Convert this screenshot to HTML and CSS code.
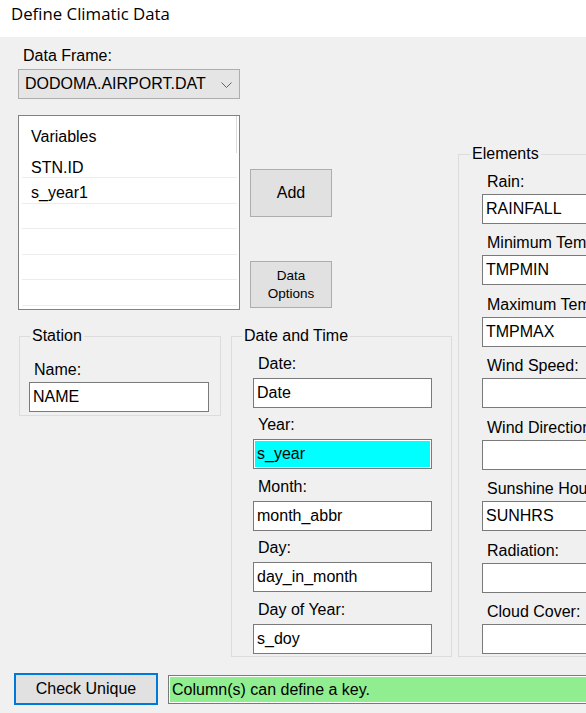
FILE: index.html
```html
<!DOCTYPE html>
<html>
<head>
<meta charset="utf-8">
<title>Define Climatic Data</title>
<link rel="stylesheet" href="styles.css">
</head>
<body>
<div class="title">Define Climatic Data</div>
<div class="content">
  <div class="left">
    <div class="top">
      <div class="pick">
        <div class="lbl">Data Frame:</div>
        <div class="combo">
          <span>DODOMA.AIRPORT.DAT</span>
          <svg viewBox="0 0 11 6" width="11" height="6"><polyline points="0.5,0.5 5.5,5.5 10.5,0.5" fill="none" stroke="#606060" stroke-width="1"/></svg>
        </div>
        <div class="list">
          <div class="list-head">Variables</div>
          <div class="row">STN.ID</div>
          <div class="row">s_year1</div>
          <div class="row"></div>
          <div class="row"></div>
          <div class="row"></div>
          <div class="row"></div>
        </div>
      </div>
      <div class="btns">
        <button class="btn add">Add</button>
        <button class="btn opts">Data<br>Options</button>
      </div>
    </div>
    <div class="groups">
      <fieldset class="grp station">
        <legend>Station</legend>
        <div class="lbl">Name:</div>
        <div class="tb"><div class="val">NAME</div></div>
      </fieldset>
      <fieldset class="grp datetime">
        <legend>Date and Time</legend>
        <div class="fields">
          <div class="field"><div class="lbl">Date:</div><div class="tb"><div class="val">Date</div></div></div>
          <div class="field"><div class="lbl">Year:</div><div class="tb cyan"><div class="val">s_year</div></div></div>
          <div class="field"><div class="lbl">Month:</div><div class="tb"><div class="val">month_abbr</div></div></div>
          <div class="field"><div class="lbl">Day:</div><div class="tb"><div class="val">day_in_month</div></div></div>
          <div class="field"><div class="lbl">Day of Year:</div><div class="tb"><div class="val">s_doy</div></div></div>
        </div>
      </fieldset>
    </div>
  </div>
  <fieldset class="grp elements">
    <legend>Elements</legend>
    <div class="fields">
      <div class="field"><div class="lbl">Rain:</div><div class="tb"><div class="val">RAINFALL</div></div></div>
      <div class="field"><div class="lbl">Minimum Temperature:</div><div class="tb"><div class="val">TMPMIN</div></div></div>
      <div class="field"><div class="lbl">Maximum Temperature:</div><div class="tb"><div class="val">TMPMAX</div></div></div>
      <div class="field"><div class="lbl">Wind Speed:</div><div class="tb"><div class="val"></div></div></div>
      <div class="field"><div class="lbl">Wind Direction:</div><div class="tb"><div class="val"></div></div></div>
      <div class="field"><div class="lbl">Sunshine Hours:</div><div class="tb"><div class="val">SUNHRS</div></div></div>
      <div class="field"><div class="lbl">Radiation:</div><div class="tb"><div class="val"></div></div></div>
      <div class="field"><div class="lbl">Cloud Cover:</div><div class="tb"><div class="val"></div></div></div>
    </div>
  </fieldset>
</div>
<div class="bottom">
  <button class="btn check">Check Unique</button>
  <div class="tb green status"><div class="val">Column(s) can define a key.</div></div>
</div>
</body>
</html>
```
FILE: styles.css
```css
html, body {
  margin: 0;
  padding: 0;
}
body {
  width: 586px;
  height: 713px;
  overflow: hidden;
  background: #f0f0f0;
  font-family: "Liberation Sans", Arial, sans-serif;
  font-size: 16px;
  color: #000;
}
.title {
  height: 37px;
  box-sizing: border-box;
  background: #fff;
  padding: 3px 0 0 11px;
  font-family: "Open Sans", "Liberation Sans", sans-serif;
  font-size: 16.8px;
  line-height: 22px;
}
.content {
  display: flex;
  align-items: flex-start;
}
.left {
  flex: none;
  width: 434px;
  padding: 10px 0 0 18px;
}
.top {
  display: flex;
  gap: 10px;
}
.pick {
  width: 222px;
}
.lbl {
  line-height: 18px;
  padding-left: 5px;
  white-space: nowrap;
}
.combo {
  margin-top: 4px;
  height: 30px;
  box-sizing: border-box;
  border: 1px solid #adadad;
  background: #e5e5e5;
  display: flex;
  align-items: center;
  justify-content: space-between;
  padding: 0 7px 0 6px;
  line-height: 28px;
}
.combo svg {
  display: block;
  margin-top: 2px;
}
.list {
  margin-top: 16px;
  height: 195px;
  box-sizing: border-box;
  border: 1px solid #828282;
  background: #fff;
  overflow: hidden;
}
.list-head {
  width: 218px;
  height: 36.5px;
  box-sizing: border-box;
  border-right: 1px solid #dadada;
  padding: 11.5px 0 0 12px;
  line-height: 18px;
}
.row {
  margin-left: 3px;
  width: 215px;
  height: 25.6px;
  box-sizing: border-box;
  border-bottom: 1px solid #ececec;
  padding: 6px 0 0 9px;
  line-height: 18px;
}
.btns {
  display: flex;
  flex-direction: column;
  gap: 44px;
  padding-top: 122px;
}
.btn {
  font: inherit;
  color: #000;
  background: #e1e1e1;
  border: 1px solid #adadad;
  padding: 0;
  margin: 0;
  box-sizing: border-box;
  text-align: center;
}
.add {
  width: 82px;
  height: 48px;
}
.opts {
  width: 82px;
  height: 47px;
  font-size: 13.5px;
  line-height: 17.5px;
}
.groups {
  display: flex;
  align-items: flex-start;
  gap: 10px;
  margin: 17px 0 0 1px;
}
.grp {
  margin: 0;
  border: 1px solid #dcdcdc;
  min-width: 0;
  box-sizing: border-box;
}
.grp legend {
  padding: 0 2px;
  line-height: 18px;
}
.station {
  width: 202px;
  padding: 16.2px 0 3px 9px;
}
.station legend {
  margin-left: 1px;
}
.station .tb {
  margin-top: 3px;
  width: 180px;
}
.datetime {
  width: 221px;
  padding: 9.8px 0 2.5px 10px;
}
.datetime .fields {
  margin-left: 11px;
}
.elements {
  flex: none;
  width: 240px;
  margin: 108px 0 0 6px;
  padding: 7.8px 0 2px 11px;
}
.elements .fields {
  margin-left: 12px;
}
.fields {
  display: flex;
  flex-direction: column;
  gap: 8.5px;
}
.field .tb {
  margin-top: 5px;
  width: 179px;
}
.elements .field .lbl {
  margin-top: 2px;
}
.elements .field .tb {
  margin-top: 3px;
  width: 200px;
}
.tb {
  height: 30px;
  box-sizing: border-box;
  border: 1px solid #7a7a7a;
  padding: 1px;
  background: #fff;
}
.val {
  height: 100%;
  line-height: 26px;
  padding-left: 2px;
  white-space: nowrap;
  overflow: hidden;
}
.cyan .val {
  background: #00ffff;
}
.green .val {
  background: #90ee90;
}
.bottom {
  display: flex;
  align-items: center;
  gap: 10px;
  padding: 16px 0 0 14px;
}
.check {
  flex: none;
  width: 144px;
  height: 32px;
  border: 2px solid #0078d7;
}
.status {
  flex: none;
  width: 440px;
  height: 29px;
}
```
